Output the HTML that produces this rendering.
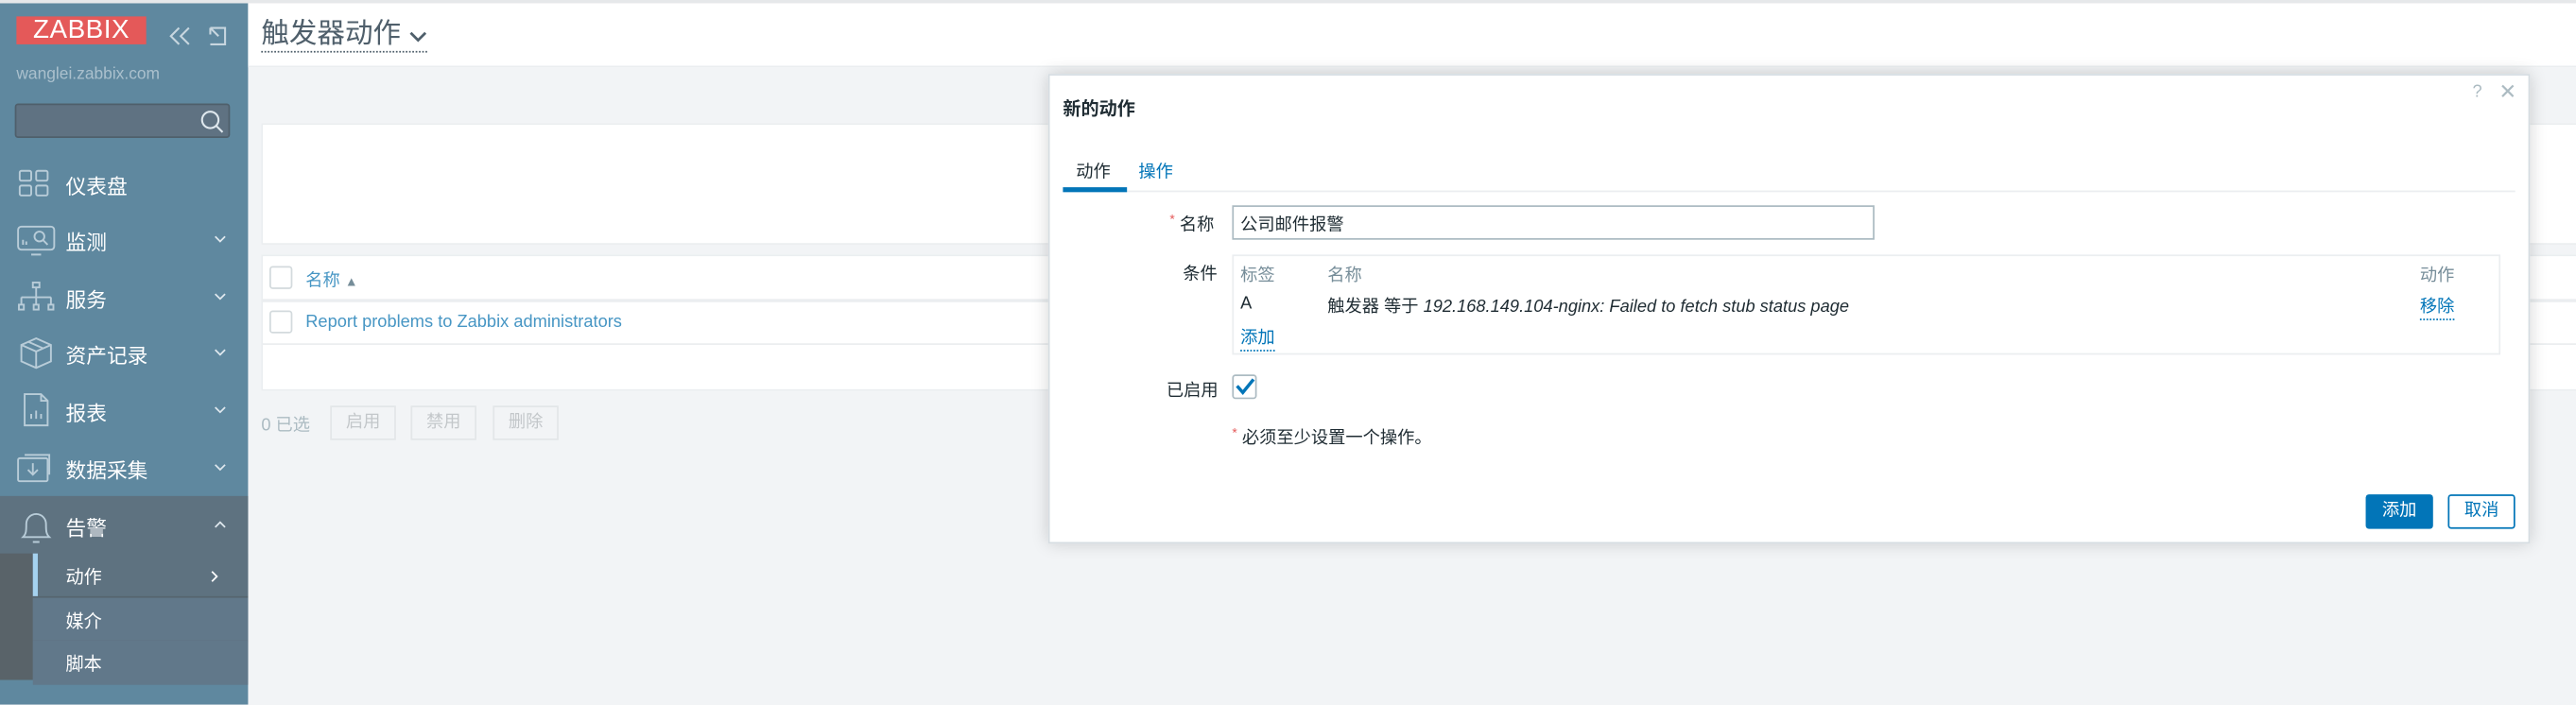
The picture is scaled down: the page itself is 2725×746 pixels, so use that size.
<!DOCTYPE html>
<html><head><meta charset="utf-8"><style>
*{box-sizing:border-box;margin:0;padding:0}
html,body{width:2725px;height:744px;overflow:hidden;background:#f2f4f6}
#w{position:absolute;left:0;top:0;width:1568px;height:429px;transform:scale(1.73788);transform-origin:0 0;font-family:"Liberation Sans","Noto Sans CJK SC",sans-serif;font-size:10.5px;color:#1f2c33;background:#f2f4f6}
.a{position:absolute}
.sb{left:0;top:2px;width:151px;height:427px;background:#5f889f}
.mi{position:absolute;left:0;width:151px;height:34px;color:#fff;font-size:12.5px}
.mi span{position:absolute;left:40px;top:9px}
.mi svg{position:absolute;left:10px;top:7px}
.mi svg.ch{left:130px;top:15px}
.sub{position:absolute;left:20px;width:131px;height:27px;color:#fff;font-size:11px;background:#61788a;border-bottom:1px solid #56646e}
.sub span{position:absolute;left:20px;top:6px}
.btn{position:absolute;height:21px;top:247px;width:40px;border:1px solid #e3e6e8;color:#c3c7ca;text-align:center;line-height:19px;font-size:10.5px;background:#f2f4f6}
.cb{position:absolute;width:14px;height:14px;border:1px solid #d3dadd;border-radius:2px;background:#fff}
.lnk{color:#0275b8;border-bottom:1px dotted #0275b8}
.gr{color:#768d99}
</style></head><body><div id="w">
<div class="a" style="left:0;top:0;width:1568px;height:2px;background:#e6e8ea"></div>
<div class="a sb"></div>
<div class="a" style="left:10px;top:10px;width:79px;height:17px;background:#e45959;color:#fff;font-size:16px;line-height:17px;text-align:center;letter-spacing:0.3px">ZABBIX</div>
<svg class="a" style="left:102px;top:15px" width="40" height="14" viewBox="0 0 40 14" fill="none" stroke="#c7d6df" stroke-width="1.2"><path d="M7 2L2 7l5 5M13 2L8 7l5 5"/><path d="M26 2h9v10h-9M26 2v4M26 2l5 5"/></svg>
<div class="a" style="left:10px;top:40px;color:#aac0cd;font-size:10px">wanglei.zabbix.com</div>
<div class="a" style="left:9px;top:63px;width:131px;height:21px;background:#5f7282;border:1px solid #4f5f6b;border-radius:2px"></div>
<svg class="a" style="left:121px;top:66px" width="16" height="16" viewBox="0 0 16 16" fill="none" stroke="#dfe8ee" stroke-width="1.2"><circle cx="7" cy="7" r="5"/><path d="M10.5 10.5l4 4"/></svg>

<div class="mi" style="top:94px"><svg width="22" height="22" viewBox="0 0 22 22" fill="none" stroke="#b8ccd8" stroke-width="1.1"><rect x="2" y="3" width="7" height="6" rx="1"/><rect x="12" y="3" width="7" height="6" rx="1"/><rect x="2" y="12" width="7" height="6" rx="1"/><rect x="12" y="12" width="7" height="6" rx="1"/></svg><span>仪表盘</span></div>
<div class="mi" style="top:128px"><svg width="24" height="22" viewBox="0 0 24 22" fill="none" stroke="#b8ccd8" stroke-width="1.1"><rect x="1" y="3" width="22" height="14" rx="2"/><path d="M9 20h6M4 14v-3M6 14v-2"/><circle cx="14" cy="9" r="3"/><path d="M16 11l3 3"/></svg><span>监测</span><svg class="ch" width="8" height="5" viewBox="0 0 8 5" fill="none" stroke="#dfe8ee"><path d="M1 1l3 3 3-3"/></svg></div>
<div class="mi" style="top:163px"><svg width="24" height="22" viewBox="0 0 24 22" fill="none" stroke="#b8ccd8" stroke-width="1.1"><rect x="10" y="2" width="4" height="3"/><path d="M12 5v6M3 11h18M3 11v4M12 11v4M21 11v4"/><rect x="1.5" y="15.5" width="3" height="3"/><rect x="10.5" y="15.5" width="3" height="3"/><rect x="19.5" y="15.5" width="3" height="3"/></svg><span>服务</span><svg class="ch" width="8" height="5" viewBox="0 0 8 5" fill="none" stroke="#dfe8ee"><path d="M1 1l3 3 3-3"/></svg></div>
<div class="mi" style="top:197px"><svg width="24" height="22" viewBox="0 0 24 22" fill="none" stroke="#b8ccd8" stroke-width="1.1"><path d="M12 2l9 4v10l-9 4-9-4V6zM3 6l9 4 9-4M12 10v10M7 4l9 4"/></svg><span>资产记录</span><svg class="ch" width="8" height="5" viewBox="0 0 8 5" fill="none" stroke="#dfe8ee"><path d="M1 1l3 3 3-3"/></svg></div>
<div class="mi" style="top:232px"><svg width="24" height="22" viewBox="0 0 24 22" fill="none" stroke="#b8ccd8" stroke-width="1.1"><path d="M5 1h10l4 4v15H5zM15 1v4h4M9 16v-3M12 16v-5M15 16v-3"/></svg><span>报表</span><svg class="ch" width="8" height="5" viewBox="0 0 8 5" fill="none" stroke="#dfe8ee"><path d="M1 1l3 3 3-3"/></svg></div>
<div class="mi" style="top:267px"><svg width="24" height="22" viewBox="0 0 24 22" fill="none" stroke="#b8ccd8" stroke-width="1.1"><rect x="1" y="5" width="18" height="14" rx="1"/><path d="M5 3h15v12M10 8v7M7 12l3 3 3-3"/></svg><span>数据采集</span><svg class="ch" width="8" height="5" viewBox="0 0 8 5" fill="none" stroke="#dfe8ee"><path d="M1 1l3 3 3-3"/></svg></div>
<div class="a" style="left:0;top:302px;width:151px;height:112px;background:#5e7280"></div>
<div class="mi" style="top:302px"><svg width="24" height="24" viewBox="0 0 24 24" fill="none" stroke="#b8ccd8" stroke-width="1.1"><path d="M4 18c2-2 2-4 2-8a6 6 0 0112 0c0 4 0 6 2 8zM10 21h4"/></svg><span>告警</span><svg class="ch" width="8" height="5" viewBox="0 0 8 5" fill="none" stroke="#dfe8ee"><path d="M1 4l3-3 3 3"/></svg></div>
<div class="a" style="left:0;top:337px;width:20px;height:77px;background:#596369"></div>
<div class="sub" style="top:337px;background:#5e7280"><span>动作</span><svg style="position:absolute;left:108px;top:10px" width="5" height="8" viewBox="0 0 5 8" fill="none" stroke="#fff"><path d="M1 1l3 3-3 3"/></svg></div>
<div class="a" style="left:20px;top:337px;width:3px;height:26px;background:#a5d2ef"></div>
<div class="sub" style="top:364px"><span>媒介</span></div>
<div class="sub" style="top:390px;border:none"><span>脚本</span></div>

<div class="a" style="left:151px;top:2px;width:1417px;height:39px;background:#fff;border-bottom:1px solid #ebeef0"></div>
<div class="a" style="left:159px;top:11px;font-size:17px;color:#4f5f6b;border-bottom:1px dotted #4f5f6b;line-height:20px">触发器动作 <svg width="11" height="7" viewBox="0 0 11 7" fill="none" stroke="#4f5f6b" stroke-width="1.6"><path d="M1 1l4.5 4.5L10 1"/></svg></div>

<div class="a" style="left:159px;top:75px;width:1420px;height:74px;background:#fff;border:1px solid #ebeef0"></div>
<div class="a" style="left:159px;top:155px;width:1420px;height:83px;background:#fff;border:1px solid #ebeef0"></div>
<div class="a" style="left:159px;top:182px;width:1420px;height:2px;background:#ebeef0"></div>
<div class="a" style="left:159px;top:209px;width:1420px;height:1px;background:#ebeef0"></div>
<div class="cb" style="left:164px;top:162px"></div>
<div class="a" style="left:186px;top:163px;color:#4796c4">名称 <span style="font-size:8px;color:#768d99">▲</span></div>
<div class="cb" style="left:164px;top:189px"></div>
<div class="a" style="left:186px;top:190px;color:#4796c4;font-size:10.5px">Report problems to Zabbix administrators</div>
<div class="a" style="left:159px;top:251px;color:#acbbc2">0 已选</div>
<div class="btn" style="left:201px">启用</div><div class="btn" style="left:250px">禁用</div><div class="btn" style="left:300px">删除</div>

<div class="a" style="left:638px;top:45px;width:902px;height:286px;background:#fff;box-shadow:0 0 10px rgba(0,0,0,0.18);border:1px solid #d6dde2"></div>
<div class="a" style="left:647px;top:58px;font-weight:bold;font-size:11px;color:#1f2c33">新的动作</div>
<div class="a" style="left:1505px;top:50px;color:#acbbc2;font-size:10.5px">?</div>
<div class="a" style="left:1521px;top:48px;color:#acbbc2;font-size:13px">✕</div>
<div class="a" style="left:655px;top:97px;color:#1f2c33">动作</div>
<div class="a" style="left:693px;top:97px;color:#0275b8">操作</div>
<div class="a" style="left:647px;top:116px;width:884px;height:1px;background:#ebeef0"></div>
<div class="a" style="left:647px;top:114px;width:39px;height:3px;background:#0275b8"></div>
<div class="a" style="left:712px;top:129px"><span style="color:#e45959;font-size:8px;vertical-align:top">*</span> 名称</div>
<div class="a" style="left:750px;top:125px;width:391px;height:21px;border:1px solid #acbbc2;padding:3px 4px">公司邮件报警</div>
<div class="a" style="left:720px;top:159px">条件</div>
<div class="a" style="left:750px;top:155px;width:772px;height:61px;border:1px solid #ebeef0"></div>
<div class="a gr" style="left:755px;top:160px">标签</div>
<div class="a gr" style="left:808px;top:160px">名称</div>
<div class="a gr" style="left:1473px;top:160px">动作</div>
<div class="a" style="left:755px;top:179px">A</div>
<div class="a" style="left:808px;top:179px">触发器 等于 <i>192.168.149.104-nginx: Failed to fetch stub status page</i></div>
<div class="a lnk" style="left:1473px;top:179px">移除</div>
<div class="a lnk" style="left:755px;top:198px">添加</div>
<div class="a" style="left:710px;top:230px">已启用</div>
<div class="a" style="left:750px;top:228px;width:15px;height:15px;border:1px solid #acbbc2;border-radius:2px"></div>
<svg class="a" style="left:752px;top:230px" width="12" height="11" viewBox="0 0 12 11" fill="none" stroke="#0275b8" stroke-width="2"><path d="M1 5l3.5 4L11 1"/></svg>
<div class="a" style="left:750px;top:259px"><span style="color:#e45959;font-size:8px;vertical-align:top">*</span> 必须至少设置一个操作。</div>
<div class="a" style="left:1440px;top:301px;width:41px;height:21px;background:#0275b8;color:#fff;text-align:center;line-height:21px;border-radius:2px">添加</div>
<div class="a" style="left:1490px;top:301px;width:41px;height:21px;border:1px solid #0275b8;color:#0275b8;text-align:center;line-height:19px;border-radius:2px;background:#fff">取消</div>
</div></body></html>
